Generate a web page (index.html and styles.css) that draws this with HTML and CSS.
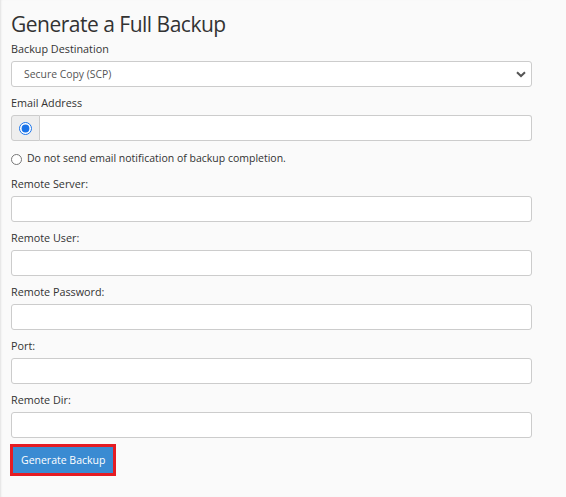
FILE: index.html
```html
<!DOCTYPE html>
<html lang="en">
<head>
<meta charset="utf-8">
<title>Generate a Full Backup</title>
<link rel="stylesheet" href="styles.css">
</head>
<body>
<div class="page">
  <h1 class="title">Generate a Full Backup</h1>
  <form class="form">
    <div class="group">
      <label class="label label-strong" for="dest">Backup Destination</label>
      <div class="select-wrap">
        <select id="dest" class="control select">
          <option>Secure Copy (SCP)</option>
        </select>
        <svg class="chevron" width="10" height="7" viewBox="0 0 10 7"><path d="M1 1.2 L5 5 L9 1.2" fill="none" stroke="#555" stroke-width="2"/></svg>
      </div>
    </div>
    <div class="group">
      <label class="label label-strong" for="email">Email Address</label>
      <div class="input-group">
        <span class="addon"><input type="radio" name="notify" class="radio" checked></span>
        <input id="email" type="text" class="control control-grouped">
      </div>
    </div>
    <div class="radio-row">
      <input type="radio" name="notify" id="nonotify" class="radio radio-small">
      <label for="nonotify" class="radio-label">Do not send email notification of backup completion.</label>
    </div>
    <div class="group">
      <label class="label" for="server">Remote Server:</label>
      <input id="server" type="text" class="control">
    </div>
    <div class="group">
      <label class="label" for="user">Remote User:</label>
      <input id="user" type="text" class="control">
    </div>
    <div class="group">
      <label class="label" for="pass">Remote Password:</label>
      <input id="pass" type="password" class="control">
    </div>
    <div class="group">
      <label class="label" for="port">Port:</label>
      <input id="port" type="text" class="control">
    </div>
    <div class="group">
      <label class="label" for="dir">Remote Dir:</label>
      <input id="dir" type="text" class="control">
    </div>
    <div class="actions">
      <button type="button" class="btn">Generate Backup</button>
    </div>
  </form>
</div>
</body>
</html>
```

FILE: styles.css
```css
html, body {
  margin: 0;
  padding: 0;
  background: #fafafa;
}
body {
  font-family: "Open Sans", "Liberation Sans", sans-serif;
  color: #333;
  font-size: 10.8px;
  line-height: 16px;
}
.page {
  min-height: 497px;
  box-sizing: border-box;
  padding: 9px 0 0 11px;
  width: 532px;
  box-shadow: inset 2px 0 2px -1px #e2e2e2;
}
.title {
  margin: 0 0 2px 0;
  font-size: 21px;
  letter-spacing: -0.5px;
  line-height: 30px;
  font-weight: 400;
  color: #333;
}
.form {
  display: flex;
  flex-direction: column;
}
.group {
  display: flex;
  flex-direction: column;
  margin-bottom: 8px;
}
.label {
  margin-bottom: 4px;
  font-size: 10.8px;
  line-height: 16px;
  font-weight: 400;
}
.label-strong {
  font-weight: 500;
}
.control {
  box-sizing: border-box;
  width: 521px;
  height: 26px;
  margin: 0;
  border: 1px solid #cccccc;
  border-radius: 3px;
  background: #fff;
  font-family: inherit;
  font-size: 10.4px;
  color: #555;
  padding: 0 12px;
  outline: none;
}
.select-wrap {
  position: relative;
  width: 521px;
}
.select {
  appearance: none;
  -webkit-appearance: none;
}
.chevron {
  position: absolute;
  right: 6px;
  top: 10px;
  pointer-events: none;
}
.input-group {
  display: flex;
  width: 521px;
}
.addon {
  box-sizing: border-box;
  width: 29px;
  height: 26px;
  display: flex;
  align-items: center;
  justify-content: center;
  background: #eeeeee;
  border: 1px solid #cccccc;
  border-radius: 3px 0 0 3px;
}
.control-grouped {
  flex: 1;
  width: auto;
  border-left: none;
  border-radius: 0 3px 3px 0;
}
.radio {
  margin: 0;
  width: 13px;
  height: 13px;
  accent-color: #1a73e8;
}
.radio-row {
  display: flex;
  align-items: center;
  gap: 5px;
  margin: 1px 0 10px 0;
  font-size: 10.5px;
  line-height: 16px;
}
.radio-small {
  width: 11px;
  height: 11px;
  margin-top: 2px;
}
.radio-label {
  color: #333;
}
.actions {
  display: flex;
  margin-top: 1px;
  padding-left: 2px;
}
.btn {
  box-sizing: border-box;
  height: 26px;
  padding: 0 8px;
  border: none;
  border-radius: 0;
  background: #3a8bd2;
  color: #fff;
  font-family: inherit;
  font-size: 10.5px;
  outline: 3px solid #e51c23;
  outline-offset: 0;
}
```
